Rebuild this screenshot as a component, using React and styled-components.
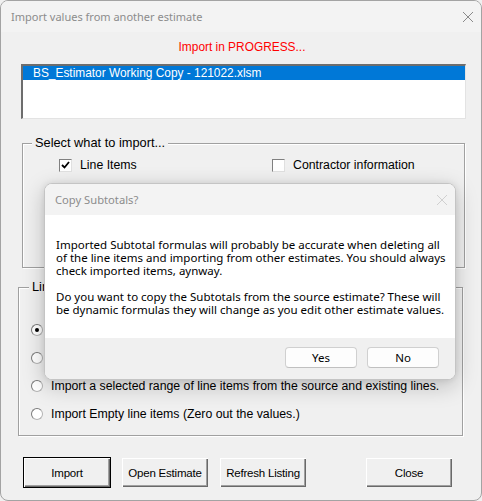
import React from 'react'
import styled, { createGlobalStyle } from 'styled-components'

const GlobalStyle = createGlobalStyle`
  html, body {
    margin: 0;
    padding: 0;
    background: #f0f0f0;
  }
  * {
    box-sizing: border-box;
  }
`

const FORM_FONT = `"Liberation Sans", Arial, sans-serif`
const UI_FONT = `"Noto Sans", "Open Sans", sans-serif`

export const Window = styled.div`
  position: relative;
  width: 482px;
  height: 501px;
  border: 1px solid #a3a3a3;
  border-radius: 8px;
  background: #f0f0f0;
  overflow: hidden;
  font-family: ${FORM_FONT};
  font-size: 12.3px;
  color: #000;
`

export const TitleBar = styled.div`
  display: flex;
  align-items: center;
  justify-content: space-between;
  height: 31px;
  padding: 0 7px 0 10px;
  background: #f3f3f3;
  font-family: ${UI_FONT};
  font-size: ${p => p.$size || 11}px;
  color: #8c8c8c;
  white-space: nowrap;
`

const CloseGlyph = ({ color = '#8a8a8a' }) => (
  <svg width="12" height="12" viewBox="0 0 12 12">
    <path d="M1 1 L11 11 M11 1 L1 11" stroke={color} strokeWidth="1" fill="none" />
  </svg>
)

export const Body = styled.div`
  display: flex;
  flex-direction: column;
`

export const Status = styled.div`
  margin-top: 8px;
  height: 15px;
  line-height: 15px;
  text-align: center;
  font-size: 11.9px;
  color: #ff0000;
  padding-left: 2px;
`

export const ListBox = styled.div`
  margin: 9px 0 0 20px;
  width: 445px;
  height: 55px;
  background: #fff;
  border-top: 2px solid #6d6d6d;
  border-left: 2px solid #6d6d6d;
  border-right: 1px solid #e3e3e3;
  border-bottom: 1px solid #e3e3e3;
`

export const ListRow = styled.div`
  height: 14px;
  line-height: 14px;
  padding-left: 10px;
  font-size: 11.9px;
  background: ${p => p.$selected ? '#0078d7' : 'transparent'};
  color: ${p => p.$selected ? '#fff' : '#000'};
  white-space: nowrap;
`

export const Frame = styled.div`
  position: relative;
  margin: ${p => p.$top}px 0 0 ${p => p.$left}px;
  width: ${p => p.$width}px;
  height: ${p => p.$height}px;
  border: 1px solid #a0a0a0;
  box-shadow: inset 1px 1px 0 #fff, 1px 1px 0 #fff;
`

export const Legend = styled.span`
  position: absolute;
  top: -9px;
  left: ${p => p.$left}px;
  padding: 0 3px;
  background: #f0f0f0;
  font-size: 12.8px;
  line-height: 16px;
  white-space: nowrap;
`

export const CheckRow = styled.div`
  display: flex;
  padding: 14px 0 0 36px;
`

export const CheckItem = styled.label`
  display: flex;
  align-items: center;
  gap: 8px;
  width: ${p => p.$width || 'auto'};
  height: 14px;
  white-space: nowrap;
`

export const Box = styled.span`
  display: inline-flex;
  align-items: center;
  justify-content: center;
  width: 13px;
  height: 13px;
  background: #fff;
  border-top: 1px solid #808080;
  border-left: 1px solid #808080;
  border-right: 1px solid #e0e0e0;
  border-bottom: 1px solid #e0e0e0;
`

export const RadioList = styled.div`
  display: flex;
  flex-direction: column;
  padding: 28px 0 0 12px;
`

export const RadioRow = styled.label`
  display: flex;
  align-items: center;
  gap: 8px;
  height: 28px;
  white-space: nowrap;
`

export const Radio = styled.span`
  width: 12px;
  height: 12px;
  border-radius: 50%;
  background: #fff;
  border: 1px solid #b4b4b4;
  border-top-color: #7a7a7a;
  border-left-color: #7a7a7a;
  flex-shrink: 0;
  display: inline-flex;
  align-items: center;
  justify-content: center;
  &::after {
    content: '';
    width: 4px;
    height: 4px;
    border-radius: 50%;
    background: ${p => p.$checked ? '#000' : 'transparent'};
  }
`

export const ButtonBar = styled.div`
  display: flex;
  gap: 10px;
  margin: 21px 0 0 22px;
`

export const FormButton = styled.button`
  width: 88px;
  height: 31px;
  margin-left: ${p => p.$push ? 48 : 0}px;
  padding: 0;
  background: #f0f0f0;
  font-family: ${FORM_FONT};
  font-size: 11.5px;
  letter-spacing: -0.2px;
  white-space: nowrap;
  color: #000;
  border: 1px solid ${p => p.$default ? '#000' : '#f0f0f0'};
  box-shadow:
    inset 1px 1px 0 #fff,
    inset -1px -1px 0 #696969,
    inset -2px -2px 0 #a0a0a0;
`

/* message box drawn over the form */
export const Dialog = styled.div`
  position: absolute;
  left: 43px;
  top: 182px;
  width: 412px;
  height: 197px;
  display: flex;
  flex-direction: column;
  border: 1px solid #c4c4c4;
  border-radius: 8px;
  overflow: hidden;
  background: #fff;
  font-family: ${UI_FONT};
  box-shadow: 0 6px 22px rgba(0, 0, 0, 0.22), 0 0 6px rgba(0, 0, 0, 0.08);
`

export const Message = styled.div`
  flex: 1;
  padding: 23px 0 0 11px;
  font-size: 11.5px;
  line-height: 13px;
  color: #000;
  white-space: nowrap;
  p {
    margin: 0 0 13px 0;
  }
`

export const Footer = styled.div`
  display: flex;
  justify-content: flex-end;
  gap: 10px;
  height: 41px;
  padding: 9px 16px 0 0;
  background: #f0f0f0;
`

export const MsgButton = styled.button`
  width: 72px;
  height: 21px;
  padding: 0;
  background: #fdfdfd;
  border: 1px solid #d0d0d0;
  border-bottom-color: #c0c0c0;
  border-radius: 4px;
  font-family: ${UI_FONT};
  font-size: 11.5px;
  color: #000;
`

const CheckMark = () => (
  <svg width="9" height="9" viewBox="0 0 9 9">
    <path d="M1 4 L3.5 6.5 L8 1" stroke="#000" strokeWidth="1.8" fill="none" />
  </svg>
)

export default function App() {
  return (
    <>
      <GlobalStyle />
      <Window>
        <TitleBar>
          <span>Import values from another estimate</span>
          <CloseGlyph />
        </TitleBar>
        <Body>
          <Status>Import in PROGRESS...</Status>
          <ListBox>
            <ListRow $selected>BS_Estimator Working Copy - 121022.xlsm</ListRow>
          </ListBox>

          <Frame $top={24} $left={21} $width={443} $height={125}>
            <Legend $left={9}>Select what to import...</Legend>
            <CheckRow>
              <CheckItem $width="213px">
                <Box><CheckMark /></Box>
                Line Items
              </CheckItem>
              <CheckItem>
                <Box />
                Contractor information
              </CheckItem>
            </CheckRow>
          </Frame>

          <Frame $top={19} $left={17} $width={445} $height={149}>
            <Legend $left={10}>Line Items Import Options</Legend>
            <RadioList>
              <RadioRow><Radio $checked />Import all line items from the source estimate.</RadioRow>
              <RadioRow><Radio />Import line items from the source and keep existing lines.</RadioRow>
              <RadioRow><Radio />Import a selected range of line items from the source and existing lines.</RadioRow>
              <RadioRow><Radio />Import Empty line items (Zero out the values.)</RadioRow>
            </RadioList>
          </Frame>

          <ButtonBar>
            <FormButton $default>Import</FormButton>
            <FormButton>Open Estimate</FormButton>
            <FormButton>Refresh Listing</FormButton>
            <FormButton $push>Close</FormButton>
          </ButtonBar>
        </Body>

        <Dialog>
          <TitleBar $size={11.2}>
            <span>Copy Subtotals?</span>
            <CloseGlyph color="#d0d0d0" />
          </TitleBar>
          <Message>
            <p>
              Imported Subtotal formulas will probably be accurate when deleting all<br />
              of the line items and importing from other estimates. You should always<br />
              check imported items, aynway.
            </p>
            <p>
              Do you want to copy the Subtotals from the source estimate? These will<br />
              be dynamic formulas they will change as you edit other estimate values.
            </p>
          </Message>
          <Footer>
            <MsgButton>Yes</MsgButton>
            <MsgButton>No</MsgButton>
          </Footer>
        </Dialog>
      </Window>
    </>
  )
}
